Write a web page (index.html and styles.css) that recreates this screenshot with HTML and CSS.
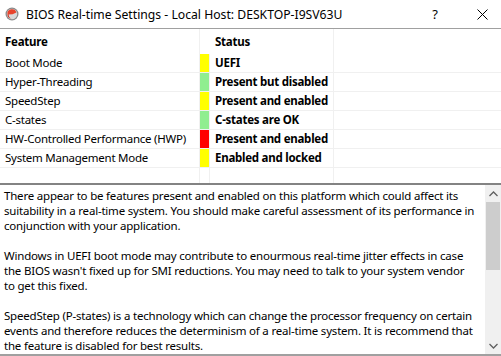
FILE: index.html
```html
<!DOCTYPE html>
<html lang="en">
  <head>
    <meta charset="UTF-8" />
    <title>BIOS Real-time Settings</title>
    <link rel="stylesheet" href="styles.css">
  </head>
  <body>
    <div class="window">
      <!-- title bar -->
      <header class="titlebar">
        <svg class="app-icon" width="14" height="14" viewBox="0 0 14 14">
          <circle cx="7" cy="7" r="6.5" fill="#8a8a8a"/>
          <circle cx="7" cy="7" r="5.2" fill="#d9d9d9"/>
          <path d="M2.4 7.4 A4.6 4.6 0 0 1 11.4 5.6 L7.6 7.2 Z" fill="#e8432c"/>
          <path d="M2.4 7.4 A4.6 4.6 0 0 0 6.6 11.6 A3.6 3.6 0 0 1 3.8 7.2 Z" fill="#c9301f"/>
        </svg>
        <span class="title">BIOS Real-time Settings - Local Host: DESKTOP-I9SV63U</span>
        <span class="help">?</span>
        <svg class="close" width="11" height="11" viewBox="0 0 11 11">
          <path d="M0.5 0.5 L10.5 10.5 M10.5 0.5 L0.5 10.5" stroke="#000" stroke-width="1" fill="none"/>
        </svg>
      </header>

      <!-- feature list -->
      <section class="features">
        <div class="row head">
          <div class="c-name">Feature</div>
          <div class="c-status wide">Status</div>
          <div class="c-rest"></div>
        </div>
        <div class="row">
          <div class="c-name">Boot Mode</div>
          <div class="c-flag yellow"></div>
          <div class="c-status">UEFI</div>
          <div class="c-rest"></div>
        </div>
        <div class="row">
          <div class="c-name">Hyper-Threading</div>
          <div class="c-flag green"></div>
          <div class="c-status">Present but disabled</div>
          <div class="c-rest"></div>
        </div>
        <div class="row">
          <div class="c-name">SpeedStep</div>
          <div class="c-flag yellow"></div>
          <div class="c-status">Present and enabled</div>
          <div class="c-rest"></div>
        </div>
        <div class="row">
          <div class="c-name">C-states</div>
          <div class="c-flag green"></div>
          <div class="c-status">C-states are OK</div>
          <div class="c-rest"></div>
        </div>
        <div class="row">
          <div class="c-name">HW-Controlled Performance (HWP)</div>
          <div class="c-flag red"></div>
          <div class="c-status">Present and enabled</div>
          <div class="c-rest"></div>
        </div>
        <div class="row">
          <div class="c-name">System Management Mode</div>
          <div class="c-flag yellow"></div>
          <div class="c-status">Enabled and locked</div>
          <div class="c-rest"></div>
        </div>
        <div class="row filler">
          <div class="c-name"></div>
          <div class="c-flag"></div>
          <div class="c-status"></div>
          <div class="c-rest"></div>
        </div>
      </section>

      <div class="splitter"></div>

      <!-- explanation text (line breaks as in the dialog's text box) -->
      <section class="details">
        <div class="text">
          <p>There appear to be features present and enabled on this platform which could affect its<br>
            suitability in a real-time system. You should make careful assessment of its performance in<br>
            conjunction with your application.</p>
          <p>Windows in UEFI boot mode may contribute to enourmous real-time jitter effects in case<br>
            the BIOS wasn't fixed up for SMI reductions. You may need to talk to your system vendor<br>
            to get this fixed.</p>
          <p>SpeedStep (P-states) is a technology which can change the processor frequency on certain<br>
            events and therefore reduces the determinism of a real-time system. It is recommend that<br>
            the feature is disabled for best results.</p>
        </div>
        <div class="scrollbar">
          <div class="sb-btn">
            <svg width="9" height="6" viewBox="0 0 9 6"><path d="M0.5 5 L4.5 1 L8.5 5" stroke="#606060" stroke-width="1.3" fill="none"/></svg>
          </div>
          <div class="sb-thumb"></div>
          <div class="sb-track"></div>
          <div class="sb-btn">
            <svg width="9" height="6" viewBox="0 0 9 6"><path d="M0.5 1 L4.5 5 L8.5 1" stroke="#606060" stroke-width="1.3" fill="none"/></svg>
          </div>
        </div>
      </section>
    </div>
  </body>
</html>
```

FILE: styles.css
```css
/* reset */
html,
body,
p {
  margin: 0;
  padding: 0;
}

body {
  font-family: "Noto Sans", "Open Sans", sans-serif;
  font-size: 11.5px;
  letter-spacing: -0.2px;
  color: #000;
  background: #fff;
}

.window {
  display: flex;
  flex-direction: column;
  width: 501px;
  height: 356px;
  overflow: hidden;
}

/* title bar */
.titlebar {
  display: flex;
  align-items: center;
  height: 28px;
  border-bottom: 1px solid #a0a0a0;
  flex-shrink: 0;
  letter-spacing: 0;
}

.app-icon {
  margin-left: 5px;
  margin-right: 7px;
}

.title {
  flex: 1;
  font-size: 12.2px;
  white-space: nowrap;
}

.help {
  font-size: 13px;
  margin-right: 39px;
}

.close {
  margin-right: 13px;
}

/* feature list */
.features {
  display: flex;
  flex-direction: column;
  height: 154px;
  flex-shrink: 0;
}

.row {
  display: flex;
  height: 18px;
  line-height: 18px;
  border-bottom: 1px solid #f0f0f0;
}

.row.head {
  height: 25px;
  line-height: 25px;
  border-bottom: 0;
  font-weight: bold;
}

.row.filler {
  flex: 1;
  border-bottom: 0;
}

.c-name {
  width: 194px;
  padding-left: 5px;
  border-right: 1px solid #f0f0f0;
  white-space: nowrap;
  overflow: hidden;
  letter-spacing: -0.25px;
}

.c-flag {
  width: 9px;
  border-right: 1px solid #f0f0f0;
}

.c-flag.yellow { background: #ffff00; }
.c-flag.green { background: #90ee90; }
.c-flag.red { background: #ff0000; }

.c-status {
  width: 118px;
  padding-left: 5px;
  border-right: 1px solid #f0f0f0;
  font-weight: bold;
  white-space: nowrap;
  letter-spacing: -0.25px;
}

.c-status.wide {
  padding-left: 15px;
}

.c-rest {
  flex: 1;
}

.splitter {
  height: 2px;
  background: #838383;
  flex-shrink: 0;
}

/* explanation text */
.details {
  display: flex;
  flex: 1;
  min-height: 0;
  border-bottom: 2px solid #a0a0a0;
}

.text {
  flex: 1;
  padding: 3px 2px 0 4px;
  line-height: 15px;
  white-space: nowrap;
  overflow: hidden;
}

.text p + p {
  margin-top: 15px;
}

.scrollbar {
  display: flex;
  flex-direction: column;
  width: 16px;
  background: #f0f0f0;
  flex-shrink: 0;
}

.sb-btn {
  height: 17px;
  display: flex;
  align-items: center;
  justify-content: center;
}

.sb-thumb {
  height: 68px;
  margin: 0 1px;
  background: #cdcdcd;
}

.sb-track {
  flex: 1;
}
```
